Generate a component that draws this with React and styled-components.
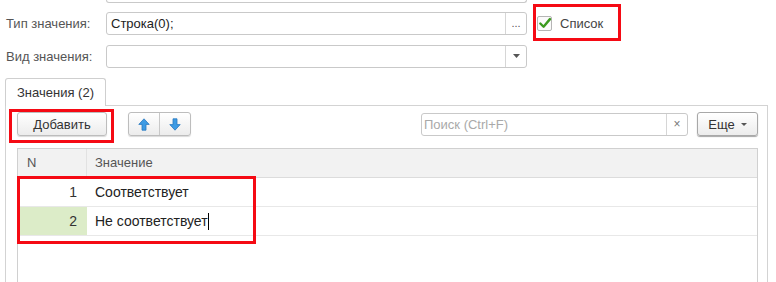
import React from 'react'
import styled, { createGlobalStyle } from "styled-components";

const GlobalStyle = createGlobalStyle`
  body {
    margin: 0;
    background: #fff;
    font-family: "Liberation Sans", Arial, sans-serif;
    font-size: 13px;
    color: #333;
  }
`;

const App = () => {
  return (
    <Page>
      <GlobalStyle />
      <TopField />

      <FieldRow>
        <Label>Тип значения:</Label>
        <Field>
          <FieldText>Строка(0);</FieldText>
          <FieldButton>...</FieldButton>
        </Field>
        <CheckGroup>
          <CheckBox>
            <svg width="15" height="15" viewBox="0 0 15 15">
              <path d="M2.5 7.5 L6 11 L12.8 2.8" fill="none" stroke="#3b9a1e" strokeWidth="2.6" strokeLinecap="round" strokeLinejoin="round" />
            </svg>
          </CheckBox>
          <CheckLabel>Список</CheckLabel>
          <Highlight $left={-4} $top={-12} $width={88} $height={37} />
        </CheckGroup>
      </FieldRow>

      <FieldRow>
        <Label>Вид значения:</Label>
        <Field>
          <FieldText />
          <FieldButton>
            <svg width="7" height="4" viewBox="0 0 7 4"><path d="M0 0 H7 L3.5 4 Z" fill="#555" /></svg>
          </FieldButton>
        </Field>
      </FieldRow>

      <TabBar>
        <Tab>Значения (2)</Tab>
      </TabBar>

      <Panel>
        <Toolbar>
          <AddWrap>
            <Button $width={90}>Добавить</Button>
            <Highlight $left={-8} $top={-3} $width={105} $height={34} />
          </AddWrap>
          <ButtonGroup>
            <GroupButton>
              <svg width="12" height="13" viewBox="0 0 12 13">
                <path d="M6 0.8 L11.2 6.4 H8 V12.2 H4 V6.4 H0.8 Z" fill="#3d9be4" stroke="#2a78bf" strokeWidth="0.8" strokeLinejoin="round" />
              </svg>
            </GroupButton>
            <GroupButton>
              <svg width="12" height="13" viewBox="0 0 12 13">
                <path d="M6 12.2 L11.2 6.6 H8 V0.8 H4 V6.6 H0.8 Z" fill="#3d9be4" stroke="#2a78bf" strokeWidth="0.8" strokeLinejoin="round" />
              </svg>
            </GroupButton>
          </ButtonGroup>
          <Spacer />
          <Search>
            <SearchText>Поиск (Ctrl+F)</SearchText>
            <SearchClear>×</SearchClear>
          </Search>
          <Button $width={61} $strong>
            Еще
            <svg width="6" height="3" viewBox="0 0 6 3"><path d="M0 0 H6 L3 3 Z" fill="#555" /></svg>
          </Button>
        </Toolbar>

        <Table>
          <HeaderRow>
            <HeadCell $n>N</HeadCell>
            <HeadCell>Значение</HeadCell>
          </HeaderRow>
          <Rows>
            <Row>
              <NumCell>1</NumCell>
              <ValueCell>Соответствует</ValueCell>
            </Row>
            <Row>
              <NumCell $active>2</NumCell>
              <ValueCell>Не соответствует<Caret /></ValueCell>
            </Row>
            <Highlight $left={-1} $top={-2} $width={239} $height={68} />
          </Rows>
        </Table>
      </Panel>
    </Page>
  );
};

const Page = styled.div`
  width: 776px;
  height: 282px;
  overflow: hidden;
  display: flex;
  flex-direction: column;
`;

const TopField = styled.div`
  margin-left: 106px;
  width: 419px;
  height: 2px;
  border: 1px solid #c9c9c9;
  border-top: none;
  border-radius: 0 0 3px 3px;
`;

const FieldRow = styled.div`
  display: flex;
  align-items: center;
  height: 23px;
  margin-top: 9px;
  & + & {
    margin-top: 10px;
  }
`;

const Label = styled.div`
  width: 100px;
  padding-left: 6px;
  color: #555;
  font-size: 13px;
`;

const Field = styled.div`
  display: flex;
  width: 421px;
  height: 23px;
  box-sizing: border-box;
  border: 1px solid #c9c9c9;
  border-radius: 3px;
  background: #fff;
`;

const FieldText = styled.div`
  flex: 1;
  padding-left: 4px;
  line-height: 21px;
  color: #222;
`;

const FieldButton = styled.div`
  width: 20px;
  border-left: 1px solid #d6d6d6;
  display: flex;
  align-items: center;
  justify-content: center;
  color: #555;
  font-size: 11px;
  line-height: 1;
  padding-bottom: 1px;
`;

const CheckGroup = styled.div`
  position: relative;
  display: flex;
  align-items: center;
  gap: 8px;
  margin-left: 10px;
`;

const CheckBox = styled.div`
  width: 15px;
  height: 15px;
  box-sizing: border-box;
  border: 1px solid #b5b5b5;
  border-radius: 2px;
  background: #fafafa;
  display: flex;
  align-items: center;
  justify-content: center;
  svg {
    margin: -1px -1px 0 0;
  }
`;

const CheckLabel = styled.span`
  color: #444;
`;

const Highlight = styled.div`
  position: absolute;
  left: ${p => p.$left}px;
  top: ${p => p.$top}px;
  width: ${p => p.$width}px;
  height: ${p => p.$height}px;
  box-sizing: border-box;
  border: 3px solid #f50a14;
  pointer-events: none;
`;

const TabBar = styled.div`
  display: flex;
  margin-top: 10px;
  padding-left: 5px;
  position: relative;
  z-index: 1;
`;

const Tab = styled.div`
  width: 101px;
  height: 27px;
  box-sizing: border-box;
  border: 1px solid #cfcfcf;
  border-bottom: none;
  border-radius: 3px 3px 0 0;
  background: #fff;
  padding-left: 11px;
  line-height: 27px;
  color: #333;
  margin-bottom: -1px;
  height: 28px;
`;

const Panel = styled.div`
  flex: 1;
  margin-left: 5px;
  width: 763px;
  box-sizing: border-box;
  border: 1px solid #d3d3d3;
  border-bottom: none;
  padding: 6px 9px 0 11px;
  display: flex;
  flex-direction: column;
`;

const Toolbar = styled.div`
  display: flex;
  align-items: center;
  height: 24px;
`;

const AddWrap = styled.div`
  position: relative;
`;

const Button = styled.div`
  width: ${p => p.$width}px;
  height: 24px;
  box-sizing: border-box;
  border: 1px solid ${p => p.$strong ? '#a8a8a8' : '#bdbdbd'};
  border-radius: 3px;
  background: linear-gradient(#ffffff, #ececec);
  box-shadow: 0 1px 1px ${p => p.$strong ? 'rgba(0,0,0,0.35)' : 'rgba(0,0,0,0.15)'};
  display: flex;
  align-items: center;
  justify-content: center;
  gap: 6px;
  color: #333;
  font-size: 13px;
  svg {
    margin-top: 1px;
  }
`;

const ButtonGroup = styled.div`
  display: flex;
  margin-left: 21px;
  height: 24px;
  box-sizing: border-box;
  border: 1px solid #bdbdbd;
  border-radius: 3px;
  background: linear-gradient(#ffffff, #ececec);
  box-shadow: 0 1px 1px rgba(0,0,0,0.15);
`;

const GroupButton = styled.div`
  width: 30px;
  display: flex;
  align-items: center;
  justify-content: center;
  & + & {
    border-left: 1px solid #c8c8c8;
  }
`;

const Spacer = styled.div`
  flex: 1;
`;

const Search = styled.div`
  display: flex;
  width: 267px;
  height: 23px;
  box-sizing: border-box;
  border: 1px solid #c9c9c9;
  border-radius: 3px;
  margin-right: 9px;
`;

const SearchText = styled.div`
  flex: 1;
  padding-left: 2px;
  line-height: 21px;
  color: #a9a9a9;
`;

const SearchClear = styled.div`
  width: 20px;
  border-left: 1px solid #d6d6d6;
  display: flex;
  align-items: center;
  justify-content: center;
  color: #777;
  font-size: 12px;
`;

const Table = styled.div`
  flex: 1;
  margin-top: 12px;
  border: 1px solid #d0d0d0;
  border-bottom: none;
  display: flex;
  flex-direction: column;
`;

const HeaderRow = styled.div`
  display: flex;
  height: 28px;
  background: #f2f2f2;
  border-bottom: 1px solid #dcdcdc;
`;

const HeadCell = styled.div`
  width: ${p => p.$n ? '69px' : 'auto'};
  flex: ${p => p.$n ? 'none' : 1};
  box-sizing: border-box;
  padding-left: ${p => p.$n ? '9px' : '8px'};
  line-height: 28px;
  color: #555;
  border-right: ${p => p.$n ? '1px solid #e2e2e2' : 'none'};
`;

const Rows = styled.div`
  position: relative;
`;

const Row = styled.div`
  display: flex;
  height: 28px;
  border-bottom: 1px solid #e8e8e8;
`;

const NumCell = styled.div`
  width: 69px;
  box-sizing: border-box;
  padding-right: 10px;
  text-align: right;
  line-height: 28px;
  background: ${p => p.$active ? '#dcecc8' : '#fff'};
  color: #333;
  font-size: 14px;
`;

const ValueCell = styled.div`
  flex: 1;
  padding-left: 8px;
  line-height: 28px;
  color: #222;
  font-size: 14px;
  display: flex;
  align-items: center;
`;

const Caret = styled.span`
  display: inline-block;
  width: 1px;
  height: 17px;
  background: #000;
`;

export default App;
